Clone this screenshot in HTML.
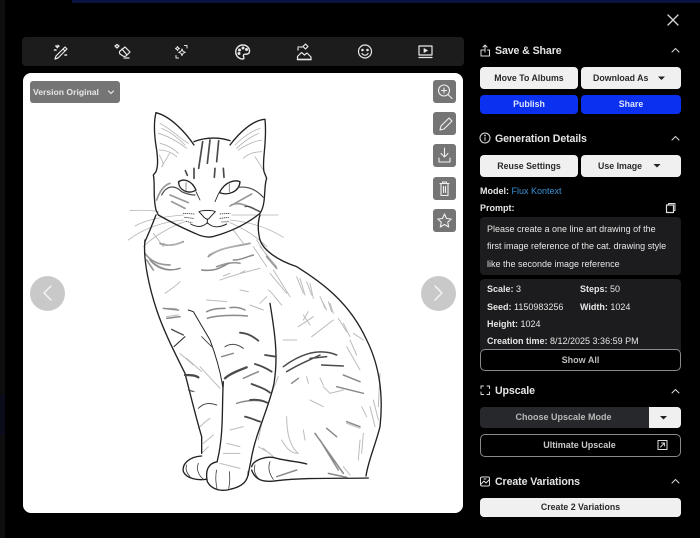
<!DOCTYPE html>
<html><head><meta charset="utf-8">
<style>
html,body{margin:0;padding:0;background:#000;}
#p{position:relative;width:700px;height:538px;overflow:hidden;background:#000;font-family:"Liberation Sans",sans-serif;filter:blur(.3px);}
#p div{position:absolute;box-sizing:border-box;}
.t{white-space:nowrap;color:#e6e6e6;font-size:9px;font-weight:700;line-height:12px;}
.h{white-space:nowrap;color:#e4e4e4;font-size:10.6px;font-weight:700;line-height:14px;letter-spacing:-.1px;}
.b{background:#f0f0f0;color:#2a2a2a;border-radius:4px;font-size:8.8px;font-weight:700;text-align:center;white-space:nowrap;}
.blue{background:#0b30f0;color:#dfe5ff;border-radius:4px;font-size:8.8px;font-weight:700;text-align:center;}
.g{background:#757575;border-radius:3px;}
svg{position:absolute;overflow:visible;}
.cat{filter:blur(.15px);}
</style></head><body>
<div id="p">
<div style="left:72px;top:0;width:628px;height:3px;background:#0a1440"></div>
<div style="left:0;top:0;width:5px;height:538px;background:#0e0e0e"></div>
<div style="left:0;top:395px;width:5px;height:40px;background:#0a0c1c"></div>

<!-- toolbar -->
<div style="left:22px;top:37px;width:442px;height:29px;background:#1c1c1c;border-radius:4px"></div>
<svg style="left:0;top:0" width="700" height="100" fill="none" stroke="#e8e8e8" stroke-width="1.200" stroke-linecap="round" stroke-linejoin="round">
<path d="M56 56l9-9 2 2-9 9-3 1zM63 49l2 2"/><path d="M56 46l1.500 1.500M58 45.500l.8.8M54.500 50h1.500M65 55h1.500" stroke-width="1.600"/>
<path d="M120 51l5-4 5 5-4 4a3 3 0 0 1-3 0l-3-2a2.500 2.500 0 0 1 0-3zM122 49l5 6M124 58h5"/><path d="M115 46l2-1.500 2 1.500-2 2z" stroke-width="1.300"/>
<path d="M187 45.500h-2.500M187 45.500v2.500M176 58h2.500M176 58v-2.500" stroke-width="1"/><path d="M182 49l1 2.300 2.300 1-2.300 1-1 2.300-1-2.300-2.300-1 2.300-1zM177.500 46.500l.7 1.300 1.300.7-1.300.7-.7 1.300-.7-1.300-1.300-.7 1.300-.7z" stroke-width="1"/>
<path d="M243 45a7 7 0 1 0-.5 14c2 0 1.500-1.500 1-2.500-.5-1.500.5-2.500 2-2.300 2 .3 4-.8 4-3 0-3.500-3-6.200-6.500-6.200z" stroke-width="1.400"/>
<circle cx="239.500" cy="50" r=".9" fill="#e8e8e8"/><circle cx="243" cy="48" r=".9" fill="#e8e8e8"/><circle cx="246.500" cy="49.500" r=".9" fill="#e8e8e8"/><circle cx="239" cy="53.500" r=".9" fill="#e8e8e8"/>
<path d="M297.500 59.500v-3l4-4 3 2.500 2.500-2 4 4v2.500z"/><path d="M298 50v-3h5" stroke-dasharray="1.500 1.300"/><path d="M297.500 59.500h13.500" stroke-width="1.500"/><path d="M305.500 44l2.500 2.500-2.500 2.500-2.500-2.500z"/>
<circle cx="365" cy="51.500" r="6.500"/><circle cx="362.500" cy="50" r=".7" fill="#e8e8e8"/><circle cx="367.500" cy="50" r=".7" fill="#e8e8e8"/><path d="M362 53.500a3.500 3.500 0 0 0 6 0"/>
<rect x="419" y="46" width="13" height="9"/><path d="M424 48.500v4l3.500-2z" fill="#e8e8e8" stroke-width=".7"/><path d="M419 57.500h13"/>
</svg>

<!-- image panel -->
<div style="left:23px;top:73px;width:440px;height:440px;background:#fff;border-radius:8px"></div>

<!-- cat head -->
<svg class="cat" style="left:120px;top:100px" width="180" height="170" viewBox="0 0 540 510" fill="none" stroke-linecap="round" stroke-linejoin="round">
<g stroke="#b4b4b4" stroke-width="2.500">
<path d="M120 70C150 85 180 115 205 130M115 100C150 110 180 130 200 145M120 130C140 135 160 145 175 160M125 85C150 95 175 115 195 135M118 150C140 150 160 160 170 170"/>
<path d="M420 85C390 95 365 115 345 135M425 120C395 125 370 140 355 150M425 155C400 155 380 165 370 175M415 100C390 112 370 125 350 145"/>
<path d="M118 165C125 180 135 195 125 200L150 158M405 170L430 210"/>
<path d="M30 332C60 330 90 330 115 335M45 378C80 358 130 350 190 345M25 420C70 385 130 365 190 360M70 440C100 410 150 380 195 365"/>
<path d="M335 345C380 345 430 345 475 345M330 360C380 365 440 380 490 412M330 368C370 385 410 410 440 440"/>
<path d="M100 400L130 440M340 390L370 430M400 440L440 500M410 420L455 490M420 440L470 500"/>
</g>
<g stroke="#999" stroke-width="5">
<path d="M75 460C90 480 110 495 150 495M120 430C140 440 170 435 190 425M265 470C300 440 350 440 390 430M440 470L470 505M80 480L100 510M290 500C320 490 340 485 360 490"/>
<path d="M110 300C120 270 135 255 150 250M150 285L205 308M155 305L195 325M345 310L395 282M330 318C355 300 385 320 420 335"/>
</g>
<g stroke="#222" stroke-width="4">
<path d="M108 38C100 70 103 110 110 150C113 175 115 195 108 215L100 225C106 250 98 290 108 330L115 345C150 365 190 385 225 400C245 410 265 415 285 408C320 398 370 380 420 340C440 310 430 260 440 235L432 215C425 180 442 130 435 58C400 60 360 95 330 135"/>
<path d="M108 38C150 48 195 95 222 135M222 125C260 110 300 112 330 122"/>
<path d="M176 245C190 235 215 240 228 270C205 285 175 270 176 245Z"/><path d="M360 245C345 238 315 245 298 278C325 288 358 275 360 245Z"/>
<path d="M198 248L198 272M328 252L328 276" stroke="#777" stroke-width="2.500"/>
<path d="M237 335C250 330 275 330 286 335L270 352C265 360 258 358 252 352Z" stroke-width="3"/>
<path d="M262 358L262 370M212 372C235 385 250 380 262 368C275 382 295 385 320 372" stroke-width="3"/>
<path d="M228 275L240 300M296 280L285 305" stroke-width="2.500"/>
<path d="M108 345L90 390L75 425" stroke-width="4"/>
<path d="M420 345C412 370 415 400 420 420" stroke-width="4"/>
</g>
<g stroke="#4a4a4a" stroke-width="5">
<path d="M248 125L236 205M270 120L262 190M296 122L290 185M222 205L222 235M310 205L312 232M285 205L283 232M196 212L202 226" />
<path d="M125 285C140 255 165 255 185 275C200 282 212 285 225 285M355 262C385 258 410 270 430 292" stroke-width="3.500"/>
<path d="M375 320C390 315 405 330 420 335" stroke-width="3.500"/>
</g>
<g stroke="#333" stroke-width="2.500" stroke-dasharray="2 4"><path d="M190 340L222 342M194 352L220 355M198 364L216 368M300 342L330 340M300 355L328 352M305 366L325 365"/></g>
</svg>

<!-- cat body -->
<svg class="cat" style="left:130px;top:240px" width="270" height="270" viewBox="0 0 810 810" fill="none" stroke-linecap="round" stroke-linejoin="round">
<g stroke="#bcbcbc" stroke-width="3">
<path d="M60 60C90 85 120 95 150 85M100 10C120 20 140 15 155 8M235 45C270 25 300 20 350 10M270 120C310 105 350 95 390 85M280 108L300 100M330 100L345 92"/>
<path d="M105 160C120 150 140 135 150 125M110 230L145 225M110 205L140 205M230 180L290 185M360 195L400 210M390 190L410 170M415 150C430 160 440 180 455 195M420 100L470 160M430 90L480 170M330 150L355 155"/>
<path d="M505 260L550 230M545 290L610 240M625 235L650 275M520 240L535 215M570 170L590 210M600 190L610 220M500 110L520 160M540 130L550 175M670 280L700 300M650 320L690 390M460 300L500 300M510 115L525 165M530 125L545 165M575 180L585 205M595 185L605 215M520 225L540 255M640 250L660 290M660 300L680 345"/>
<path d="M180 450L195 455M240 535C225 545 215 555 205 565M250 585L220 610M300 570L340 560M290 610L330 620M280 640L330 640M270 670L330 685M235 620L215 640M150 340L190 375M170 355L215 395M210 380L270 445"/>
<path d="M445 410C420 470 395 540 385 600M470 530C470 580 480 620 505 640C480 640 470 625 455 600M385 620L420 640M400 625L430 650M540 480L580 500M600 460L640 450M650 550L690 565M695 500L710 530M690 600L685 660M750 400L745 500M520 570L525 600M640 680L660 705M730 480L745 540M720 500L735 560M700 580L695 640M580 440L600 460M530 410L535 430M570 415L580 435"/>
</g>
<g stroke="#8a8a8a" stroke-width="4.500">
<path d="M60 60C85 90 120 95 150 85M215 90C250 95 270 85 295 70M310 60C330 62 350 50 370 45M100 205L145 210M110 235L150 230M125 268L160 285"/>
<path d="M555 580L640 700M590 565L620 590M570 600L625 690M640 405L690 425M620 440L700 460M485 430L505 415M440 710L500 690M595 700L650 712M650 545L690 560"/>
<path d="M230 215C250 205 270 205 285 205M300 203C320 200 335 205 345 210M232 235C260 225 320 225 352 228M275 350L310 340M340 415L385 395M320 490C350 480 390 478 412 488"/>
</g>
<g stroke="#222" stroke-width="4">
<path d="M45 0C38 60 60 150 80 210C100 270 130 330 165 400C180 460 200 540 215 590L215 640"/>
<path d="M390 0C400 30 440 60 500 80C580 130 660 190 710 300C750 380 760 470 750 560C735 620 715 660 708 708"/>
<path d="M215 648C180 650 155 670 160 695C170 715 200 722 228 718"/>
<path d="M262 665C235 670 225 690 232 725C245 750 275 755 300 748C340 740 355 720 355 695"/>
<path d="M280 425C275 500 282 580 262 662"/>
<path d="M420 190C435 280 445 350 432 430C415 510 380 570 365 650C360 680 355 695 355 705"/>
<path d="M365 680C370 660 410 645 440 655C480 665 510 665 530 672"/>
<path d="M365 690C375 720 400 728 440 722C530 712 630 716 715 714"/>
<path d="M420 665C412 685 420 705 430 718M205 670C198 690 205 705 220 718M170 675C165 690 172 700 180 710M260 690C255 710 258 735 262 750M298 695C300 715 300 730 296 745M375 675C370 690 375 705 385 715" stroke="#444" stroke-width="2.500"/>
<path d="M175 210L190 215L240 300C255 340 270 385 278 440" stroke-width="3"/>
<path d="M132 320L165 290" stroke-width="3"/>
</g>
<g stroke="#4a4a4a" stroke-width="5">
<path d="M165 405C180 405 195 405 205 412M285 415C300 400 330 390 350 382" stroke-width="7"/>
<path d="M330 278C355 280 370 290 385 302M405 345L438 350M375 372C395 378 410 385 425 395M365 432C385 440 405 445 420 458M360 480C375 478 395 480 412 488M345 530C365 535 375 540 390 545" stroke-width="5.500"/>
<path d="M285 320C300 310 320 310 340 325M205 505C225 485 245 490 260 495M125 268C135 275 150 280 160 285M215 290L245 320M175 450L190 455" stroke-width="3"/>
<path d="M460 380C500 350 560 320 620 345M540 355L590 350M575 375L640 378M470 395C510 370 540 360 570 345" stroke-width="4.500"/>
</g>
</svg>

<!-- version dropdown -->
<div class="g" style="left:30px;top:81px;width:90px;height:22px"></div>
<div class="t" style="left:33px;top:86px;font-size:8.6px;color:#e6e6e6">Version Original</div>
<svg style="left:0;top:0" width="700" height="300" fill="none" stroke="#eee" stroke-width="1.100" stroke-linecap="round" stroke-linejoin="round"><path d="M108.500 91l2.500 2.500 2.500-2.500"/></svg>

<!-- right image actions -->
<div class="g" style="left:433px;top:80px;width:23px;height:23px"></div>
<div class="g" style="left:433px;top:112px;width:23px;height:23px"></div>
<div class="g" style="left:433px;top:144px;width:23px;height:23px"></div>
<div class="g" style="left:433px;top:177px;width:23px;height:23px"></div>
<div class="g" style="left:433px;top:209px;width:23px;height:23px"></div>
<svg style="left:0;top:0" width="700" height="300" fill="none" stroke="#f0f0f0" stroke-width="1.100" stroke-linecap="round" stroke-linejoin="round">
<circle cx="444" cy="90.500" r="5.500"/><path d="M448 94.500l4 4M444 88v5M441.500 90.500h5"/>
<path d="M440 130l1-4 8-8 3 3-8 8z"/>
<path d="M444.500 148v9M441 153.500l3.500 3.500 3.500-3.500M439 158v4h11v-4"/>
<path d="M440 183.500h9M442.500 183.500v-1.500h4v1.500M441 183.500v12h7v-12M443.500 186.500v6M445.500 186.500v6"/>
<path d="M444.500 214l2 4.500 4.800.5-3.600 3.200 1 4.800-4.200-2.500-4.200 2.500 1-4.800-3.600-3.200 4.800-.5z"/>
</svg>

<!-- nav circles -->
<div style="left:30px;top:276px;width:35px;height:35px;border-radius:50%;background:#c9c9c9"></div>
<div style="left:421px;top:276px;width:35px;height:35px;border-radius:50%;background:#c9c9c9"></div>
<svg style="left:0;top:250px" width="700" height="90" fill="none" stroke="#f4f4f4" stroke-width="1.500" stroke-linecap="round" stroke-linejoin="round"><path d="M51 36l-7 7 7 7M435 36l7 7-7 7"/></svg>

<!-- close -->
<svg style="left:0;top:0" width="700" height="40" fill="none" stroke="#d8d8d8" stroke-width="1.300" stroke-linecap="round"><path d="M668 15l10 10M678 15l-10 10"/></svg>

<div class="h" style="left:495px;top:44px">Save &amp; Share</div>
<div class="b" style="left:480px;top:67px;width:98px;height:22px;line-height:22px">Move To Albums</div>
<div class="b" style="left:581px;top:67px;width:100px;height:22px;line-height:22px;text-align:left;padding-left:12px">Download As</div>
<div class="blue" style="left:480px;top:95px;width:98px;height:19px;line-height:19px">Publish</div>
<div class="blue" style="left:581px;top:95px;width:100px;height:19px;line-height:19px">Share</div>

<div class="h" style="left:495px;top:132px">Generation Details</div>
<div class="b" style="left:480px;top:155px;width:98px;height:22px;line-height:22px">Reuse Settings</div>
<div class="b" style="left:581px;top:155px;width:100px;height:22px;line-height:22px;text-align:left;padding-left:17px">Use Image</div>

<div class="t" style="left:480px;top:185px">Model: <span style="color:#3c93d6;font-weight:400">Flux Kontext</span></div>
<div class="t" style="left:480px;top:202px">Prompt:</div>

<div style="left:480px;top:217px;width:201px;height:58px;background:#1c1c1e;border-radius:4px"></div>
<div class="t" style="left:487px;top:223px;font-weight:400;color:#e6e6e6">Please create a one line art drawing of the</div>
<div class="t" style="left:487px;top:240px;font-weight:400;color:#e6e6e6">first image reference of the cat. drawing style</div>
<div class="t" style="left:487px;top:258px;font-weight:400;color:#e6e6e6">like the seconde image reference</div>

<div style="left:480px;top:279px;width:201px;height:72px;background:#1c1c1e;border-radius:4px 4px 0 0"></div>
<div class="t" style="left:487px;top:283px">Scale: <span style="font-weight:400">3</span></div>
<div class="t" style="left:580px;top:283px">Steps: <span style="font-weight:400">50</span></div>
<div class="t" style="left:487px;top:301px">Seed: <span style="font-weight:400">1150983256</span></div>
<div class="t" style="left:580px;top:301px">Width: <span style="font-weight:400">1024</span></div>
<div class="t" style="left:487px;top:318px">Height: <span style="font-weight:400">1024</span></div>
<div class="t" style="left:487px;top:335px">Creation time: <span style="font-weight:400">8/12/2025 3:36:59 PM</span></div>
<div class="t" style="left:480px;top:349px;width:201px;height:22px;background:#000;border:1px solid #8a8a8a;border-radius:5px;line-height:20px;text-align:center;color:#bdbdbd">Show All</div>

<div class="h" style="left:495px;top:384px">Upscale</div>
<div style="left:480px;top:407px;width:169px;height:21px;background:#26282b;border-radius:4px 0 0 4px"></div>
<div style="left:649px;top:407px;width:32px;height:21px;background:#f0f0f0;border-radius:0 4px 4px 0"></div>
<div class="t" style="left:480px;top:411px;width:167px;text-align:center;color:#b8b8b8">Choose Upscale Mode</div>
<div class="t" style="left:480px;top:434px;width:201px;height:23px;border:1px solid #8a8a8a;border-radius:5px;line-height:21px;text-align:center;color:#c8c8c8;padding-right:2px">Ultimate Upscale</div>

<div class="h" style="left:495px;top:475px">Create Variations</div>
<div class="b" style="left:480px;top:498px;width:201px;height:19px;line-height:19px">Create 2 Variations</div>

<!-- sidebar icons (on top of boxes) -->
<svg style="left:0;top:0" width="700" height="538" fill="none" stroke="#dcdcdc" stroke-width="1" stroke-linecap="round" stroke-linejoin="round">
<path d="M484 50h-3v6h8.500v-6h-2M485 52v-7M483 47l2-2 2 2"/>
<path d="M672 52l3.500-3.500 3.500 3.500M672 140l3.500-3.500 3.500 3.500M672 393l3.500-3.500 3.500 3.500M672 483l3.500-3.500 3.500 3.500"/>
<circle cx="485" cy="138" r="5"/><path d="M485 137.500v3"/><circle cx="485" cy="135.500" r=".4"/>
<path d="M481 388.500v-2.500h2.500M487 386h2.500v2.500M481 392v2.500h2.500M487 394.500h2.500V392"/>
<rect x="480.500" y="477" width="9" height="9" rx="1.500"/><path d="M481 484l3-3 2 2 3-3M484 479h2"/>
<rect x="658" y="440.500" width="9" height="9" stroke-width="1"/><path d="M660.500 447l4-4M661.500 443h3v3" stroke-width=".9"/>
<rect x="666.500" y="205" width="7" height="7.500" stroke-width="1.200"/><path d="M668.500 205v-1.500h6.500v7h-1.500" stroke-width="1"/>
</svg>
<svg style="left:0;top:0" width="700" height="538" fill="#222"><path d="M658 76.500h7l-3.500 3.500zM653.500 164h7l-3.500 3.500zM660 416h7l-3.500 3.500z"/></svg>
</div>
</body></html>
